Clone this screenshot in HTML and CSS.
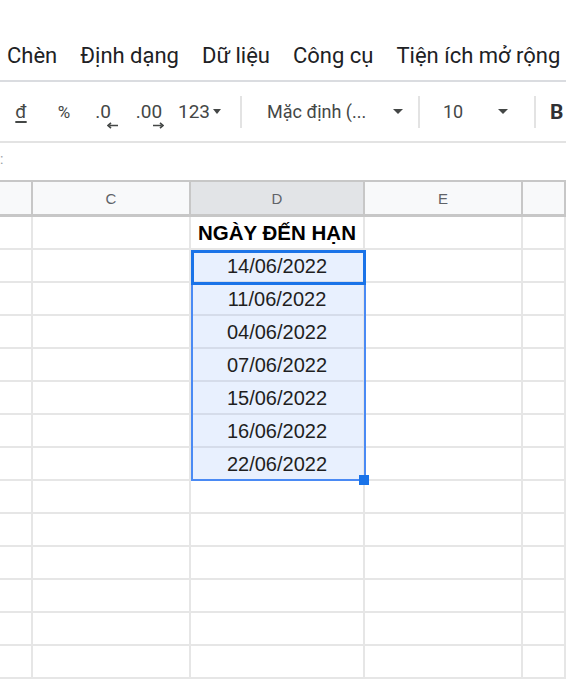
FILE: index.html
```html
<!DOCTYPE html>
<html lang="vi">
<head>
<meta charset="utf-8">
<title>Sheet</title>
<link rel="stylesheet" href="styles.css">
</head>
<body>
<div class="app">
  <nav class="menubar">
    <span class="menu-item">Chèn</span>
    <span class="menu-item">Định dạng</span>
    <span class="menu-item">Dữ liệu</span>
    <span class="menu-item">Công cụ</span>
    <span class="menu-item">Tiện ích mở rộng</span>
  </nav>
  <div class="toolbar">
    <span class="tb tb-cur"><u>đ</u></span>
    <span class="tb tb-pct">%</span>
    <span class="tb tb-dec0">
      <span class="dec-stack">.0<svg class="dec-arrow" width="11" height="7" viewBox="0 0 11 7"><path d="M11 3.5H2.5M4 0.8L1 3.5 4 6.2" fill="none" stroke="#444746" stroke-width="1.6"/></svg></span>
    </span>
    <span class="tb tb-dec00">
      <span class="dec-stack">.00<svg class="dec-arrow dec-arrow-r" width="11" height="7" viewBox="0 0 11 7"><path d="M0 3.5H8.5M7 0.8L10 3.5 7 6.2" fill="none" stroke="#444746" stroke-width="1.6"/></svg></span>
    </span>
    <span class="tb tb-fmt">123<span class="caret small"></span></span>
    <span class="sep"></span>
    <span class="tb tb-font"><span>Mặc định (...</span><span class="caret"></span></span>
    <span class="sep"></span>
    <span class="tb tb-size"><span>10</span><span class="caret"></span></span>
    <span class="sep"></span>
    <span class="tb tb-bold">B</span>
  </div>
  <div class="formula-bar"><span class="fx-rest">:</span></div>
  <div class="sheet">
    <div class="grid">
      <div class="hd"></div><div class="hd">C</div><div class="hd hd-sel">D</div><div class="hd">E</div><div class="hd"></div>

      <div class="c"></div><div class="c"></div><div class="c title">NGÀY ĐẾN HẠN</div><div class="c"></div><div class="c"></div>
      <div class="c"></div><div class="c"></div><div class="c sel">14/06/2022</div><div class="c"></div><div class="c"></div>
      <div class="c"></div><div class="c"></div><div class="c sel">11/06/2022</div><div class="c"></div><div class="c"></div>
      <div class="c"></div><div class="c"></div><div class="c sel">04/06/2022</div><div class="c"></div><div class="c"></div>
      <div class="c"></div><div class="c"></div><div class="c sel">07/06/2022</div><div class="c"></div><div class="c"></div>
      <div class="c"></div><div class="c"></div><div class="c sel">15/06/2022</div><div class="c"></div><div class="c"></div>
      <div class="c"></div><div class="c"></div><div class="c sel">16/06/2022</div><div class="c"></div><div class="c"></div>
      <div class="c"></div><div class="c"></div><div class="c sel">22/06/2022</div><div class="c"></div><div class="c"></div>
      <div class="c"></div><div class="c"></div><div class="c"></div><div class="c"></div><div class="c"></div>
      <div class="c"></div><div class="c"></div><div class="c"></div><div class="c"></div><div class="c"></div>
      <div class="c"></div><div class="c"></div><div class="c"></div><div class="c"></div><div class="c"></div>
      <div class="c"></div><div class="c"></div><div class="c"></div><div class="c"></div><div class="c"></div>
      <div class="c"></div><div class="c"></div><div class="c"></div><div class="c"></div><div class="c"></div>
      <div class="c"></div><div class="c"></div><div class="c"></div><div class="c"></div><div class="c"></div>
    </div>
    <div class="selection"></div>
    <div class="active-cell"></div>
    <div class="fill-handle"></div>
  </div>
</div>
</body>
</html>
```
FILE: styles.css
```css
* { box-sizing: border-box; }
html, body { margin: 0; padding: 0; background: #fff; }
body { width: 566px; height: 691px; overflow: hidden; font-family: Roboto, "Liberation Sans", Arial, sans-serif; }
.app { width: 566px; height: 691px; overflow: hidden; display: flex; flex-direction: column; }

.menubar {
  height: 82px;
  flex: none;
  display: flex;
  align-items: center;
  gap: 23px;
  padding: 30px 0 0 7px;
  border-bottom: 2px solid #dadce0;
  white-space: nowrap;
  font-size: 22px;
  color: #202124;
  overflow: hidden;
}
.menu-item { flex: none; }

.toolbar {
  height: 61px;
  flex: none;
  display: flex;
  align-items: center;
  border-bottom: 2px solid #e3e3e3;
  white-space: nowrap;
  font-size: 19px;
  color: #444746;
  overflow: hidden;
}
.tb { flex: none; display: flex; align-items: center; justify-content: center; height: 100%; }
.tb-cur { width: 42px; font-size: 19px; }
.tb-cur u { text-decoration-thickness: 1.5px; text-underline-offset: 3px; }
.tb-pct { width: 44px; font-size: 17px; }
.tb-dec0 { width: 34px; }
.tb-dec00 { width: 58px; }
.dec-stack { position: relative; display: inline-block; font-size: 19px; }
.dec-arrow { position: absolute; left: 12px; top: 22px; }
.dec-arrow-r { left: 17px; }
.tb-fmt { width: 52px; justify-content: flex-start; font-size: 19px; }
.caret {
  display: inline-block;
  width: 0; height: 0;
  border-left: 5px solid transparent;
  border-right: 5px solid transparent;
  border-top: 5px solid #444746;
}
.caret.small { margin-left: 3px; border-left-width: 4.5px; border-right-width: 4.5px; }
.sep { flex: none; width: 2px; height: 32px; background: #e3e3e3; margin: 0 10px; }
.tb-font { width: 156px; justify-content: space-between; padding: 0 5px 0 15px; font-size: 18px; }
.tb-size { width: 94px; justify-content: space-between; padding: 0 16px 0 13px; font-size: 18px; }
.tb-bold { font-weight: bold; font-size: 21px; color: #303134; padding-left: 4px; }

.formula-bar { height: 37px; position: relative; flex: none; }
.fx-rest { position: absolute; left: 0; top: 8px; font-size: 14px; color: #9aa0a6; }

.sheet { position: relative; flex: 1; }
.grid {
  display: grid;
  grid-template-columns: 33px 158px 174px 158px 43px;
  grid-auto-rows: 33px;
  grid-template-rows: 37px;
}
.hd {
  background: #f8f9fa;
  border-top: 2px solid #c7c7c7;
  border-right: 2px solid #c7c7c7;
  border-bottom: 3px solid #c7c7c7;
  display: flex;
  align-items: center;
  justify-content: center;
  font-family: "Liberation Sans", Arial, sans-serif;
  font-size: 15px;
  color: #5f6368;
  padding-top: 1px;
}
.hd-sel { background: #e2e4e7; color: #5f6368; }
.c {
  border-right: 2px solid #e6e6e6;
  border-bottom: 2px solid #e6e6e6;
  display: flex;
  align-items: center;
  justify-content: center;
  font-family: "Liberation Sans", Arial, sans-serif;
  font-size: 20px;
  color: #1f1f1f;
  white-space: nowrap;
  padding-top: 1px;
}
.c.title { font-weight: bold; font-size: 20.5px; color: #000; }
.c.sel { background: #e8f0fe; border-bottom-color: #d5dcea; }

.selection {
  position: absolute;
  left: 191px; top: 70px;
  width: 175px; height: 231px;
  border: 2px solid #4a8af4;
  pointer-events: none;
}
.active-cell {
  position: absolute;
  left: 191px; top: 70px;
  width: 175px; height: 35px;
  border: 3px solid #1a73e8;
}
.fill-handle {
  position: absolute;
  left: 359px; top: 295px;
  width: 10px; height: 10px;
  background: #1a73e8;
}
```
